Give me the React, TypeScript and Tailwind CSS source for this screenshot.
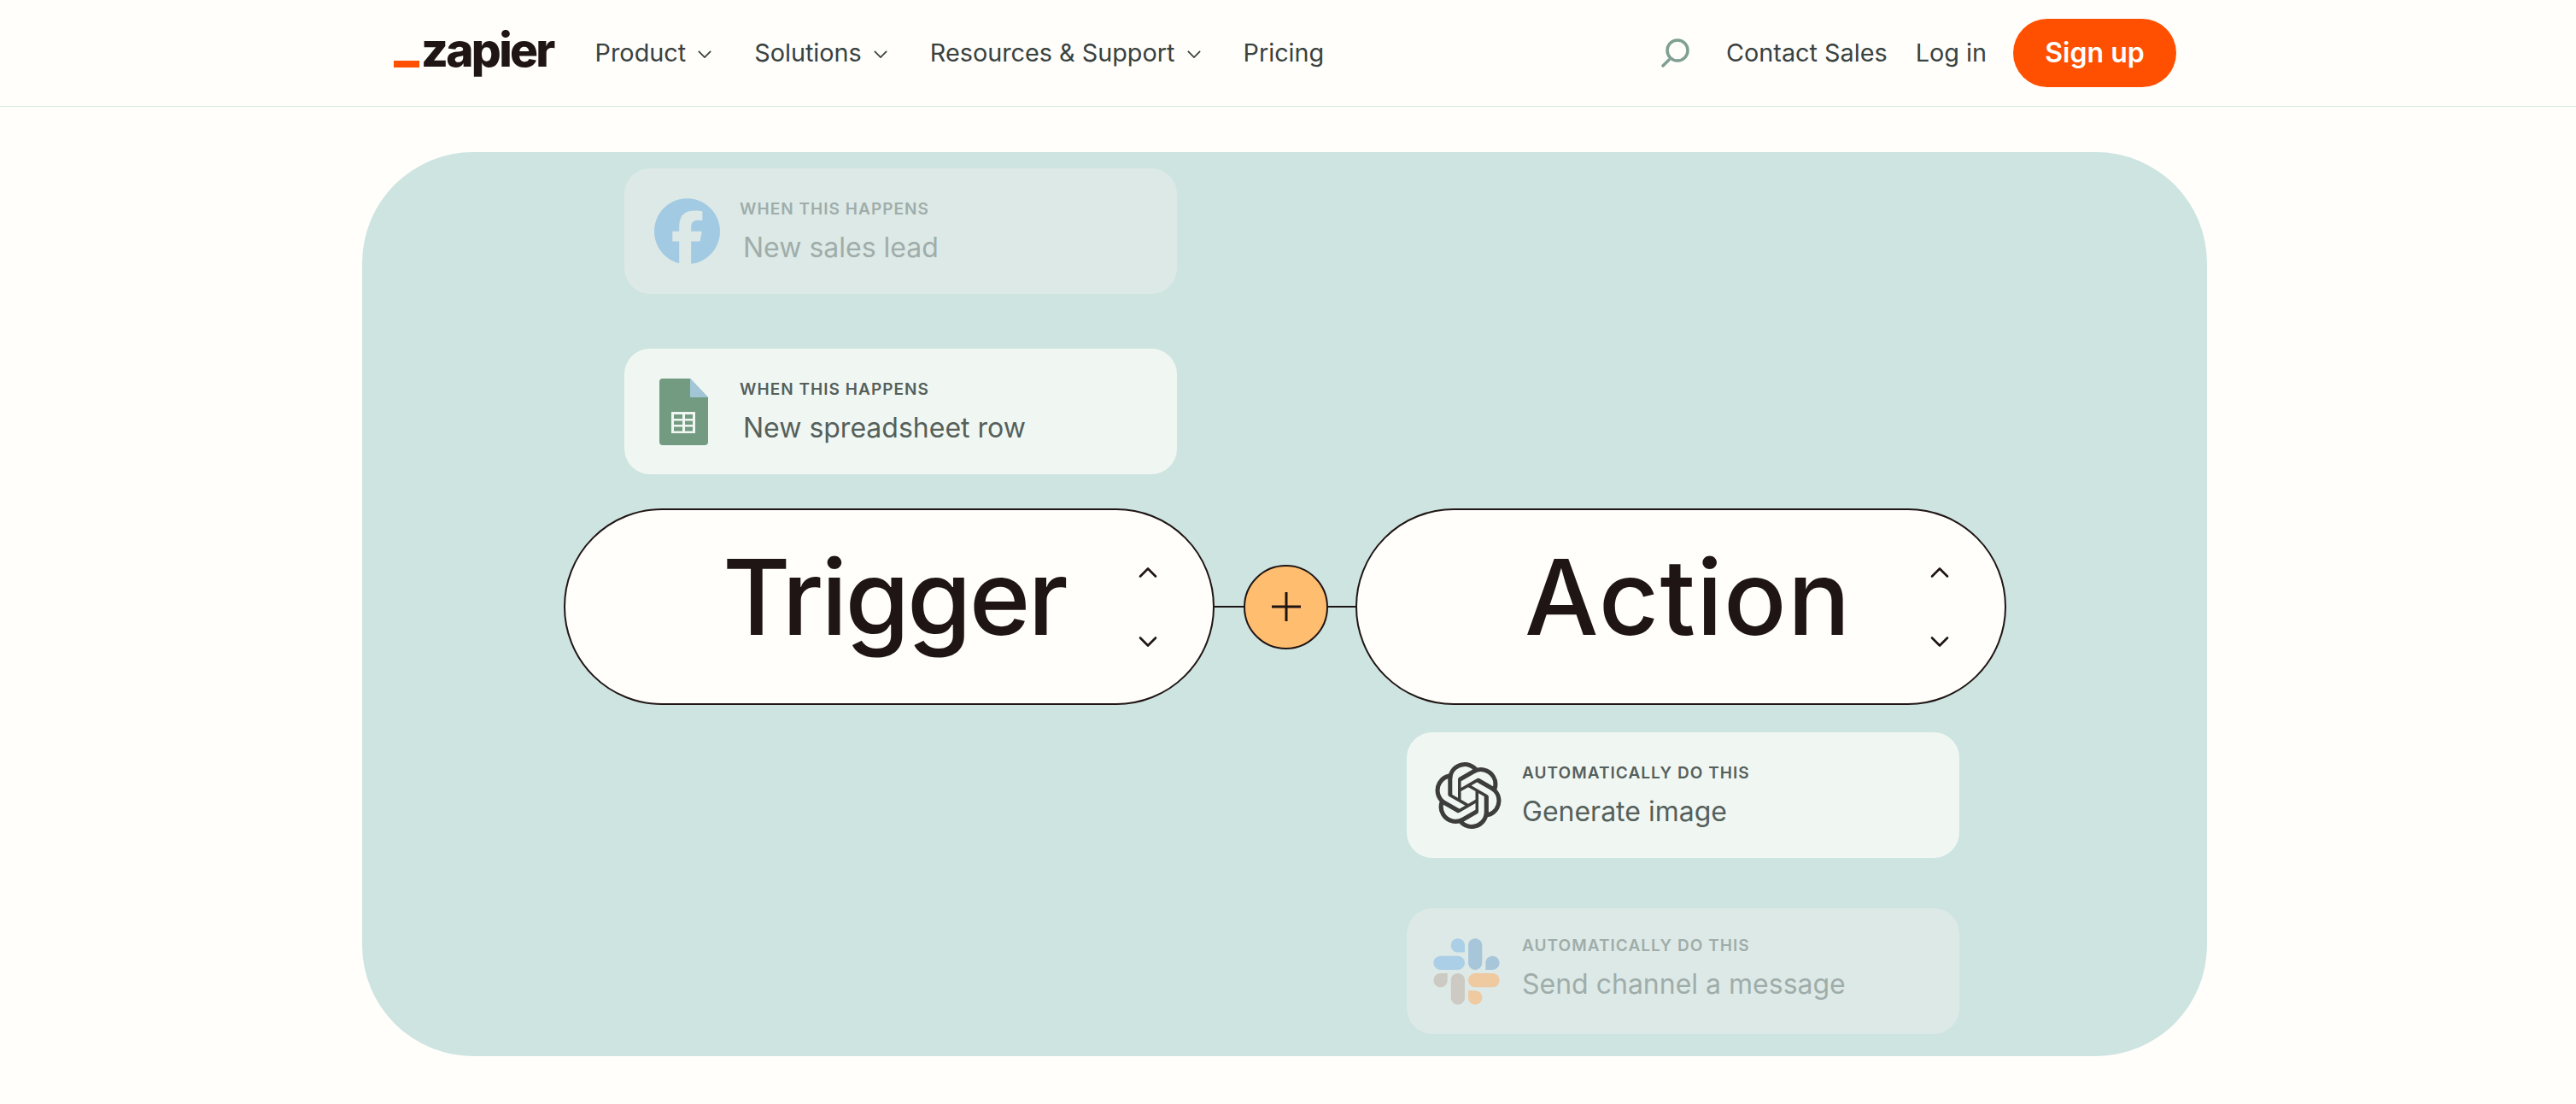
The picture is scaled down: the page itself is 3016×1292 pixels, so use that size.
import { ReactNode } from 'react'
import { ChevronDown, ChevronUp } from 'lucide-react'
import { SiFacebook, SiOpenai } from 'react-icons/si'

function NavItem({ label }: { label: string }) {
  return (
    <a className="flex items-center gap-[14px] text-[#39423f]">
      {label}
      <svg viewBox="0 0 18 10" className="w-[16px] h-[9px] mt-[3px]" fill="none" stroke="currentColor" strokeWidth="2">
        <path d="M1 1l8 8 8-8" />
      </svg>
    </a>
  )
}

function SheetIcon() {
  return (
    <svg viewBox="0 0 57 78" className="w-[57px] h-[78px]">
      <path d="M4 0h32l21 22v52a4 4 0 0 1-4 4H4a4 4 0 0 1-4-4V4a4 4 0 0 1 4-4z" fill="#739b82" />
      <path d="M36 0l21 22H36z" fill="#a3c6d6" />
      <path d="M14 39h28v25H14z" fill="#f0f7f3" />
      <path d="M17 42h10v5H17zM30 42h9v5h-9zM17 49.500h10v4.500H17zM30 49.500h9v4.500h-9zM17 56.500h10v5H17zM30 56.500h9v5h-9z" fill="#739b82" />
    </svg>
  )
}

function SlackIcon() {
  return (
    <svg viewBox="0 0 127 127" className="w-[78px] h-[78px]">
      <path fill="#cdc9c3" d="M27.2 80c0 7.300-5.900 13.200-13.200 13.200C6.700 93.200.8 87.300.8 80c0-7.300 5.900-13.200 13.200-13.200h13.200V80zm6.600 0c0-7.300 5.900-13.200 13.200-13.200 7.300 0 13.200 5.900 13.200 13.200v33c0 7.300-5.900 13.200-13.200 13.200-7.300 0-13.200-5.900-13.200-13.200V80z" />
      <path fill="#abcfe6" d="M47 27c-7.300 0-13.200-5.900-13.200-13.200C33.800 6.500 39.700.6 47 .6c7.300 0 13.200 5.900 13.200 13.200V27H47zm0 6.700c7.300 0 13.200 5.900 13.200 13.200 0 7.300-5.900 13.200-13.200 13.200H13.900C6.600 60.100.7 54.200.7 46.900c0-7.300 5.900-13.200 13.200-13.200H47z" />
      <path fill="#a8c6da" d="M99.900 46.900c0-7.300 5.900-13.200 13.200-13.200 7.300 0 13.200 5.900 13.200 13.200 0 7.300-5.900 13.200-13.200 13.200H99.900V46.900zm-6.600 0c0 7.300-5.900 13.200-13.200 13.200-7.300 0-13.200-5.900-13.200-13.200V13.800C66.900 6.500 72.800.6 80.100.6c7.300 0 13.200 5.900 13.200 13.200v33.100z" />
      <path fill="#efc9a0" d="M80.100 99.800c7.300 0 13.200 5.900 13.200 13.200 0 7.300-5.900 13.200-13.200 13.200-7.300 0-13.200-5.900-13.200-13.200V99.800h13.200zm0-6.600c-7.300 0-13.200-5.900-13.200-13.200 0-7.300 5.900-13.200 13.200-13.200h33.100c7.300 0 13.200 5.900 13.200 13.200 0 7.300-5.900 13.200-13.200 13.200H80.100z" />
    </svg>
  )
}

function StepCard({
  icon,
  iconInset,
  label,
  title,
  faded,
  indent,
  lift,
}: {
  icon: ReactNode
  iconInset: string
  label: string
  title: string
  faded?: boolean
  indent?: boolean
  lift?: boolean
}) {
  return (
    <div
      className={`flex items-center w-[647px] h-[147px] rounded-[30px] ${
        faded ? 'bg-[#dde9e6]' : 'bg-[#f0f7f3]'
      }`}
    >
      <div className={`w-[135px] shrink-0 flex ${iconInset}`}>{icon}</div>
      <div className={`flex flex-col ${lift ? 'mb-[5px]' : 'mt-[3px]'}`}>
        <span
          className={`text-[19px] leading-[24px] font-semibold tracking-[0.055em] ${
            faded ? 'text-[#9fadaa]' : 'text-[#55605b]'
          }`}
        >
          {label}
        </span>
        <span
          className={`mt-[11px] text-[32px] leading-[44px] ${indent ? 'ml-[4px]' : ''} ${
            faded ? 'text-[#9fadaa]' : 'text-[#55605b]'
          }`}
        >
          {title}
        </span>
      </div>
    </div>
  )
}

function Pill({ word, offset, tracking }: { word: string; offset: string; tracking: string }) {
  return (
    <div
      className={`flex items-center justify-between w-[762px] h-[230px] rounded-full border-2 border-[#201515] bg-[#fffefb] pr-[58px] ${offset}`}
    >
      <span className={`text-[122px] leading-none font-medium text-[#201515] mb-[22px] ${tracking}`}>{word}</span>
      <div className="flex flex-col items-center gap-[45px] text-[#201515]">
        <ChevronUp className="w-[36px] h-[36px]" strokeWidth={1.75} />
        <ChevronDown className="w-[36px] h-[36px]" strokeWidth={1.75} />
      </div>
    </div>
  )
}

export default function App() {
  return (
    <div className="min-h-[1292px] bg-[#fffefb] font-['Inter',sans-serif]">
      <header className="flex items-center justify-between h-[125px] pl-[461px] pr-[468px] border-b border-[#d9e9e7] text-[28.8px]">
        <div className="flex items-center">
          <div className="flex items-end mr-[49px] mb-[8px]">
            <div className="w-[30px] h-[8px] bg-[#ff4f00] mb-[7px] mr-[2px]" />
            <span className="text-[55px] leading-none font-extrabold tracking-[-0.05em] text-[#201515]">zapier</span>
          </div>
          <nav className="flex items-center gap-[50px]">
            <NavItem label="Product" />
            <NavItem label="Solutions" />
            <NavItem label="Resources & Support" />
            <a className="text-[#39423f]">Pricing</a>
          </nav>
        </div>
        <div className="flex items-center">
          <svg viewBox="0 0 34 34" className="w-[34px] h-[34px] mr-[43px]" fill="none" stroke="#7f9f93" strokeWidth="3.5">
            <circle cx="20" cy="14" r="12" />
            <path d="M10 25l-7 7" strokeLinecap="round" />
          </svg>
          <a className="text-[#39423f] mr-[33px]">Contact Sales</a>
          <a className="text-[#39423f] mr-[31px]">Log in</a>
          <button className="h-[80px] w-[191px] rounded-full bg-[#ff4f00] text-white font-semibold text-[32px]">Sign up</button>
        </div>
      </header>

      <main className="mt-[53px] ml-[424px] w-[2160px] h-[1058px] rounded-[130px] bg-[#cde4e0] pt-[19px] overflow-hidden">
        <div className="flex flex-col gap-[64px] ml-[307px]">
          <StepCard
            faded
            indent
            iconInset="pl-[35px]"
            icon={<SiFacebook className="w-[77px] h-[77px] text-[#a2cae3]" />}
            label="WHEN THIS HAPPENS"
            title="New sales lead"
          />
          <StepCard indent iconInset="pl-[41px]" icon={<SheetIcon />} label="WHEN THIS HAPPENS" title="New spreadsheet row" />
        </div>

        <div className="flex items-center mt-[40px] ml-[236px]">
          <Pill word="Trigger" offset="pl-[184px]" tracking="tracking-[-0.024em]" />
          <div className="w-[34px] h-[2px] bg-[#201515]" />
          <div className="flex items-center justify-center w-[99px] h-[99px] rounded-full border-2 border-[#201515] bg-[#ffbd6f] text-[#201515]">
            <svg viewBox="0 0 36 36" className="w-[36px] h-[36px]" stroke="currentColor" strokeWidth="3">
              <path d="M18 1v34M1 18h34" />
            </svg>
          </div>
          <div className="w-[32px] h-[2px] bg-[#201515]" />
          <Pill word="Action" offset="pl-[196px]" tracking="tracking-[0.01em]" />
        </div>

        <div className="flex flex-col gap-[59px] mt-[32px] ml-[1223px]">
          <StepCard iconInset="pl-[33px]" icon={<SiOpenai className="w-[78px] h-[78px] text-[#3d3d3d]" />} label="AUTOMATICALLY DO THIS" title="Generate image" />
          <StepCard faded lift iconInset="pl-[31px]" icon={<SlackIcon />} label="AUTOMATICALLY DO THIS" title="Send channel a message" />
        </div>
      </main>
    </div>
  )
}
